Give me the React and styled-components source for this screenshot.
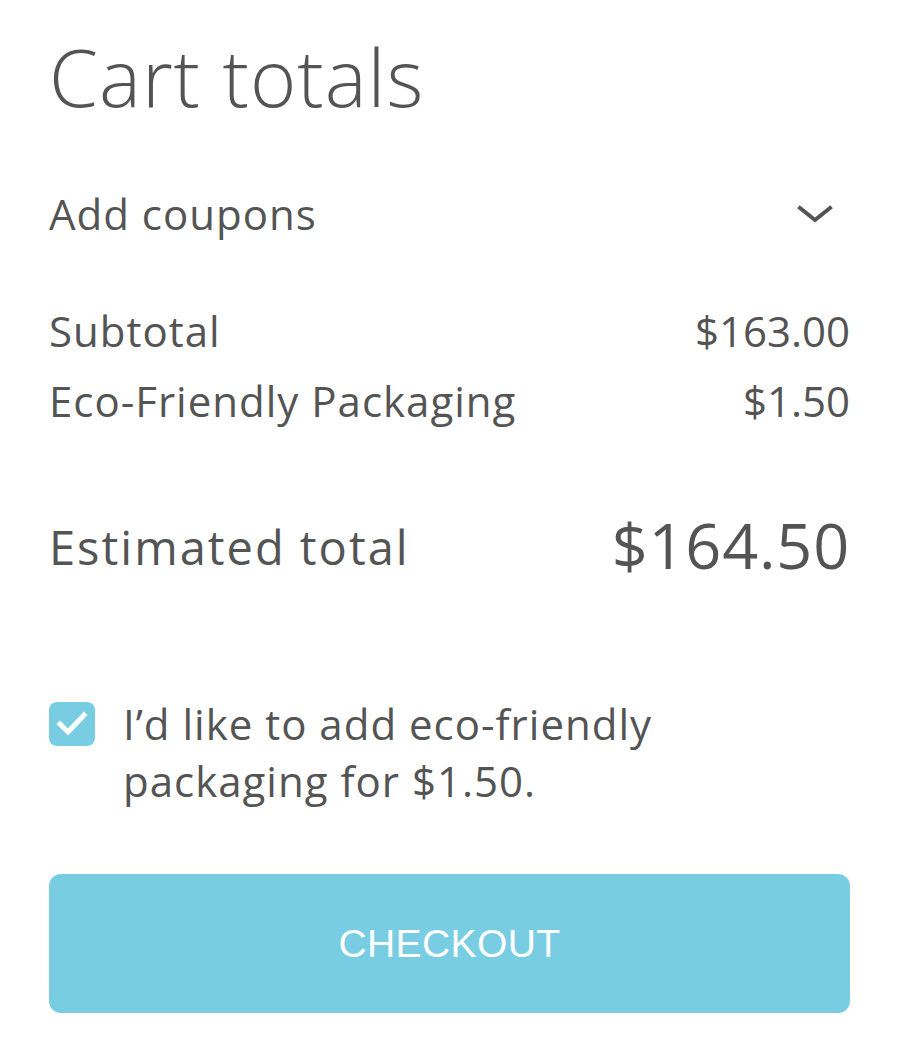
import React from "react";
import styled, { createGlobalStyle } from "styled-components";

const GlobalStyle = createGlobalStyle`
  html, body {
    margin: 0;
    padding: 0;
    background: #ffffff;
  }
  body {
    font-family: "Open Sans", "Noto Sans", sans-serif;
    color: #545454;
  }
`;

function ChevronDown() {
  return (
    <svg width="36" height="24" viewBox="0 0 36 24" fill="none">
      <path
        d="M3 6 L18 18 L33 6"
        stroke="#545454"
        strokeWidth="4"
        strokeLinecap="square"
        strokeLinejoin="miter"
      />
    </svg>
  );
}

function CheckMark() {
  return (
    <svg width="46" height="44" viewBox="0 0 46 44" fill="none">
      <path
        d="M11 22 L19 30 L35 13"
        stroke="#ffffff"
        strokeWidth="5"
        strokeLinecap="square"
      />
    </svg>
  );
}

function CartTotals() {
  return (
    <Container>
      <Title>Cart totals</Title>
      <CouponRow>
        <span>Add coupons</span>
        <ChevronDown />
      </CouponRow>
      <Lines>
        <Line>
          <span>Subtotal</span>
          <Amount>$163.00</Amount>
        </Line>
        <Line>
          <span>Eco-Friendly Packaging</span>
          <Amount>$1.50</Amount>
        </Line>
      </Lines>
      <TotalRow>
        <TotalLabel>Estimated total</TotalLabel>
        <TotalPrice>$164.50</TotalPrice>
      </TotalRow>
      <CheckRow>
        <CheckBox>
          <CheckMark />
        </CheckBox>
        <CheckLabel>I’d like to add eco-friendly packaging for $1.50.</CheckLabel>
      </CheckRow>
      <CheckoutButton>CHECKOUT</CheckoutButton>
    </Container>
  );
}

export default function App() {
  return (
    <>
      <GlobalStyle />
      <CartTotals />
    </>
  );
}

const Container = styled.div`
  display: flex;
  flex-direction: column;
  padding: 29px 49px 0 49px;
`;

const Title = styled.h2`
  margin: 0;
  font-size: 79px;
  font-weight: 300;
  line-height: 95px;
  letter-spacing: 1px;
`;

const CouponRow = styled.div`
  display: flex;
  align-items: center;
  justify-content: space-between;
  margin-top: 60px;
  height: 60px;
  font-size: 42px;
  line-height: 60px;
  letter-spacing: 1px;
  padding-right: 17px;
`;

const Lines = styled.div`
  display: flex;
  flex-direction: column;
  margin-top: 52px;
`;

const Line = styled.div`
  display: flex;
  justify-content: space-between;
  font-size: 42px;
  line-height: 70px;
  letter-spacing: 1px;
`;

const Amount = styled.span`
  letter-spacing: 0;
`;

const TotalRow = styled.div`
  display: flex;
  align-items: center;
  justify-content: space-between;
  margin-top: 71px;
`;

const TotalLabel = styled.span`
  font-size: 47px;
  line-height: 56px;
  letter-spacing: 2px;
  padding-top: 3px;
`;

const TotalPrice = styled.span`
  font-size: 63px;
  line-height: 76px;
  letter-spacing: 0.8px;
`;

const CheckRow = styled.div`
  display: flex;
  align-items: flex-start;
  gap: 28px;
  margin-top: 112px;
`;

const CheckBox = styled.div`
  flex: none;
  width: 46px;
  height: 44px;
  margin-top: 7px;
  border-radius: 8px;
  background: #79cde2;
  display: flex;
  align-items: center;
  justify-content: center;
`;

const CheckLabel = styled.span`
  max-width: 640px;
  font-size: 42px;
  line-height: 57px;
  letter-spacing: 1px;
`;

const CheckoutButton = styled.button`
  margin-top: 65px;
  height: 139px;
  border: none;
  border-radius: 12px;
  background: #79cde2;
  color: #ffffff;
  font-family: "Liberation Sans", Arial, sans-serif;
  font-size: 39px;
  font-weight: 400;
  letter-spacing: 0.4px;
  cursor: pointer;
`;
